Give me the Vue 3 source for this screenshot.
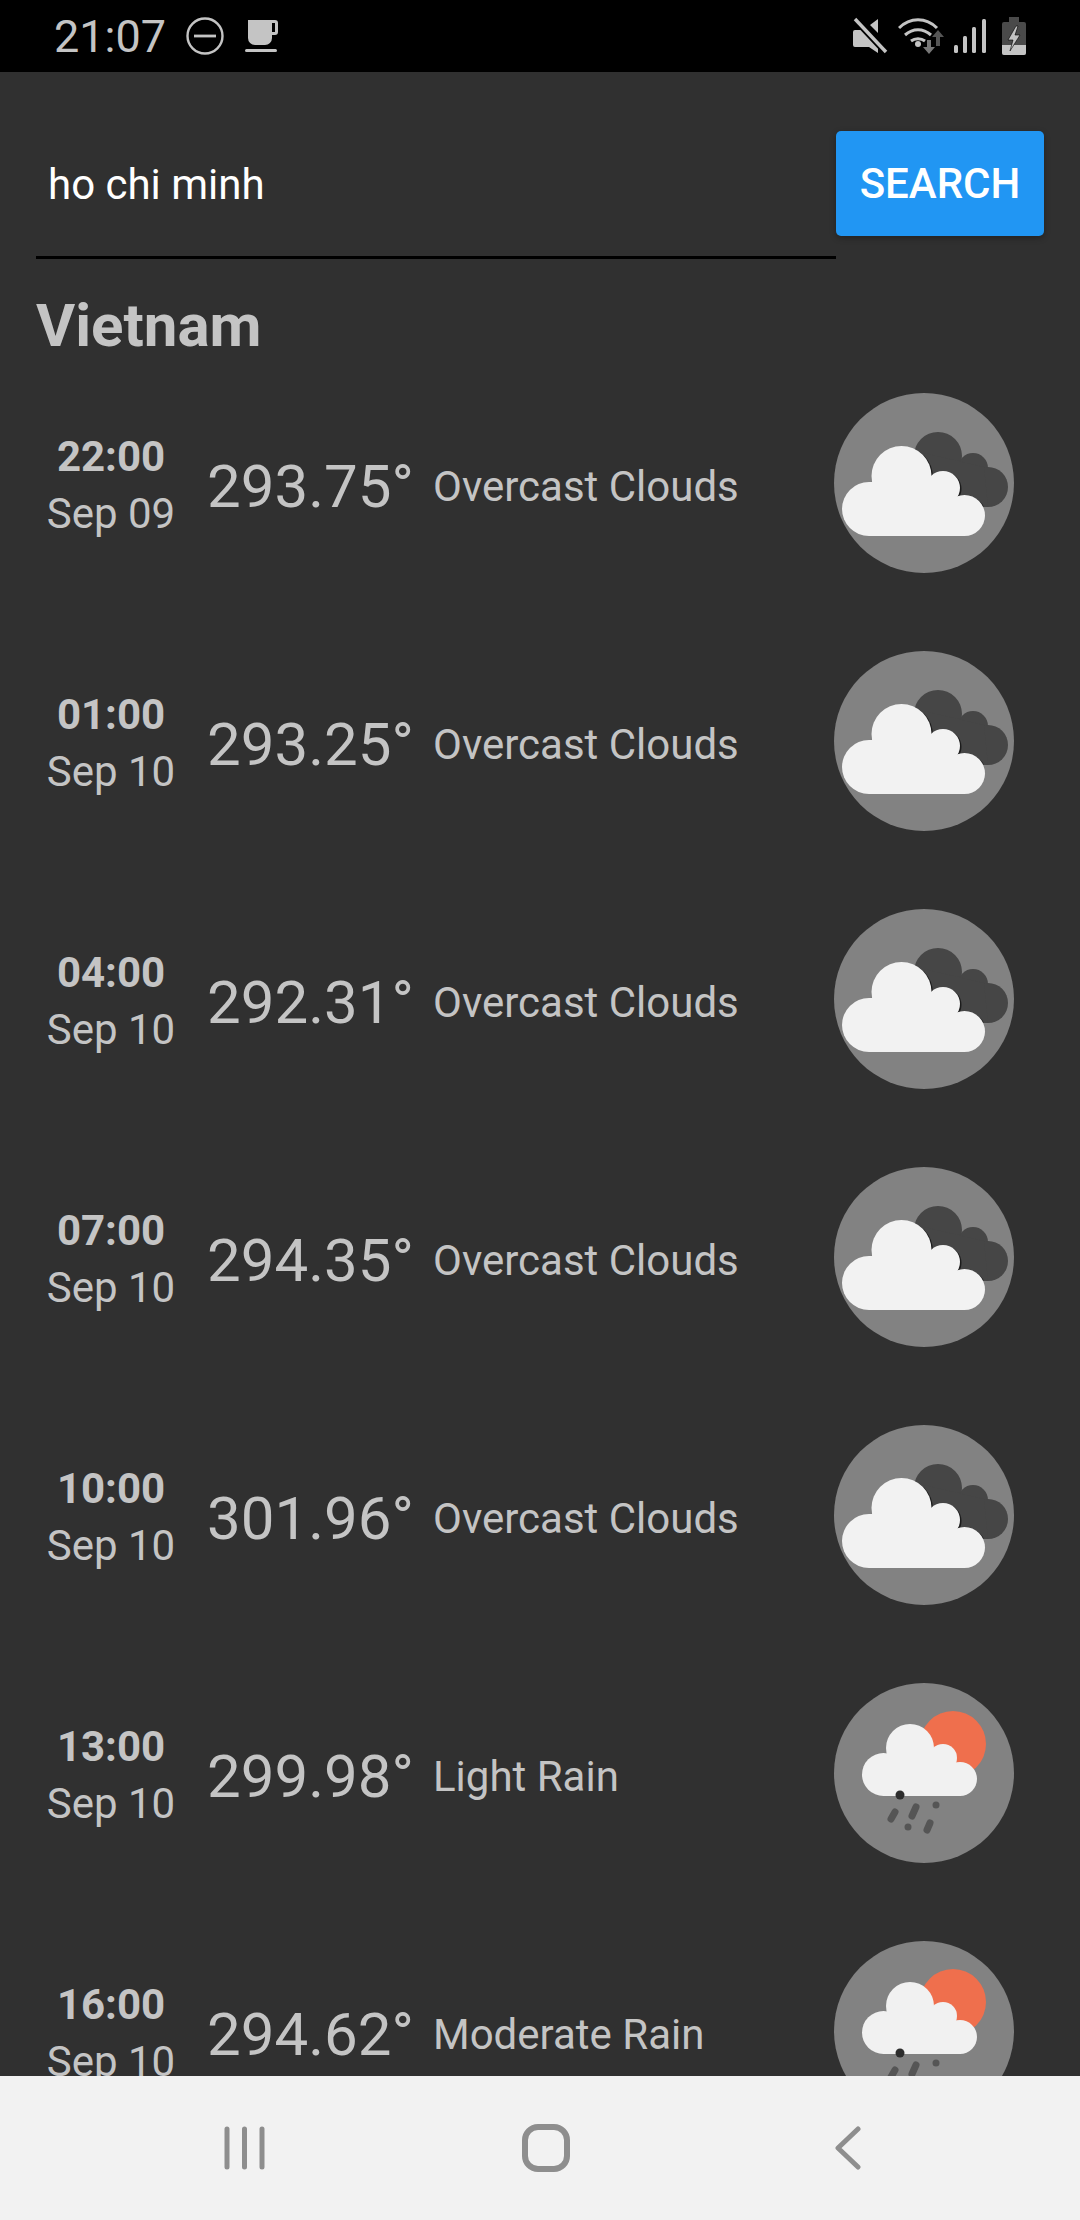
<script setup>
const rows = [
  { time: '22:00', date: 'Sep 09', temp: '293.75°', desc: 'Overcast Clouds', rain: false },
  { time: '01:00', date: 'Sep 10', temp: '293.25°', desc: 'Overcast Clouds', rain: false },
  { time: '04:00', date: 'Sep 10', temp: '292.31°', desc: 'Overcast Clouds', rain: false },
  { time: '07:00', date: 'Sep 10', temp: '294.35°', desc: 'Overcast Clouds', rain: false },
  { time: '10:00', date: 'Sep 10', temp: '301.96°', desc: 'Overcast Clouds', rain: false },
  { time: '13:00', date: 'Sep 10', temp: '299.98°', desc: 'Light Rain', rain: true },
  { time: '16:00', date: 'Sep 10', temp: '294.62°', desc: 'Moderate Rain', rain: true }
]
</script>

<template>
  <div class="page">
    <header class="status">
      <span class="clock">21:07</span>
      <svg class="dnd" width="40" height="40" viewBox="0 0 40 40">
        <circle cx="20" cy="20" r="17.5" fill="none" stroke="#c4c4c4" stroke-width="2.4" />
        <rect x="9" y="18.6" width="22" height="2.8" fill="#c4c4c4" />
      </svg>
      <svg class="cup" width="36" height="34" viewBox="0 0 36 34">
        <path d="M3 1h27a3 3 0 0 1 3 3v9a3 3 0 0 1-3 3h-3v3a7 7 0 0 1-7 7H10a7 7 0 0 1-7-7zM27 4v9h3V4z" fill="#c4c4c4" fill-rule="evenodd" />
        <rect x="0" y="30" width="32" height="3" rx="1.5" fill="#c4c4c4" />
      </svg>
      <div class="status-right">
        <svg width="36" height="38" viewBox="0 0 36 38">
          <path d="M1 15a2 2 0 0 1 2-2h6l3-2 14 14v11l-9-6H3a2 2 0 0 1-2-2zM18 8l8-6v14z" fill="#c4c4c4" />
          <path d="M3 2l31 33" stroke="#000" stroke-width="7" />
          <path d="M3 2l31 33" stroke="#c4c4c4" stroke-width="3.4" />
        </svg>
        <svg class="wifi" width="50" height="38" viewBox="0 0 50 38">
          <g fill="none" stroke="#c4c4c4" stroke-width="3">
            <path d="M1 11C12 0 28 0 39 11" />
            <path d="M7 18c8-7 18-7 26 0" />
            <path d="M13 24c4-3 10-3 14 0" />
          </g>
          <circle cx="20" cy="27" r="3" fill="#c4c4c4" />
          <path d="M29 23h4v7h4l-6 7-6-7h4z" fill="#777" />
          <path d="M40 13l6 7h-4v9h-4v-9h-4z" fill="#555" />
        </svg>
        <svg class="bars" width="34" height="36" viewBox="0 0 34 36">
          <rect x="0" y="27" width="4" height="8" rx="1.5" fill="#c4c4c4" />
          <rect x="9" y="18" width="4" height="17" rx="1.5" fill="#c4c4c4" />
          <rect x="18" y="9" width="4" height="26" rx="1.5" fill="#c4c4c4" />
          <rect x="28" y="1" width="4" height="34" rx="1.5" fill="#c4c4c4" />
        </svg>
        <svg class="batt" width="24" height="38" viewBox="0 0 24 38">
          <path d="M7 0h10v5h5a2 2 0 0 1 2 2v29a2 2 0 0 1-2 2H2a2 2 0 0 1-2-2V7a2 2 0 0 1 2-2h5z" fill="#4a4a4a" />
          <path d="M0 28h24v8a2 2 0 0 1-2 2H2a2 2 0 0 1-2-2z" fill="#c4c4c4" />
          <path d="M14 9l-8 14h5l-3 11 10-16h-5l3-9z" fill="#c4c4c4" stroke="#000" stroke-width=".6" />
        </svg>
      </div>
    </header>

    <main class="content">
      <section class="search">
        <div class="field">ho chi minh</div>
        <button class="btn">SEARCH</button>
      </section>
      <h1 class="country">Vietnam</h1>
      <ul class="list">
        <li v-for="row in rows" :key="row.time" class="row">
          <div class="when">
            <b>{{ row.time }}</b>
            <span>{{ row.date }}</span>
          </div>
          <span class="temp">{{ row.temp }}</span>
          <span class="desc">{{ row.desc }}</span>
          <svg class="icon" width="180" height="180" viewBox="0 0 180 180">
            <circle cx="90" cy="90" r="90" fill="#828282" />
            <g v-if="!row.rain">
              <clipPath id="dark-cloud">
                <circle cx="104" cy="63" r="24" />
                <circle cx="139" cy="75" r="15" />
                <circle cx="154" cy="94" r="20" />
                <path d="M90 60L150 74L154 114L120 110z" />
              </clipPath>
              <g fill="#464646">
                <circle cx="104" cy="63" r="24" />
                <circle cx="139" cy="75" r="15" />
                <circle cx="154" cy="94" r="20" />
                <path d="M90 60L150 74L154 114L120 110z" />
              </g>
              <g fill="#1c1c1c" clip-path="url(#dark-cloud)">
                <circle cx="69" cy="84" r="30" />
                <circle cx="110.500" cy="96" r="17" />
                <circle cx="132" cy="123.500" r="20.500" />
              </g>
              <g fill="#f2f2f2">
                <circle cx="35" cy="116" r="27" />
                <circle cx="67.500" cy="83" r="30" />
                <circle cx="109" cy="95" r="17" />
                <circle cx="130.500" cy="122.500" r="20.500" />
                <rect x="35" y="89" width="74" height="54" />
                <rect x="109" y="104" width="22" height="39" />
              </g>
            </g>
            <g v-else>
              <circle cx="119" cy="61" r="33" fill="#ef6f4d" />
              <g fill="#f1f1f1">
                <circle cx="49.500" cy="91.500" r="21.500" />
                <circle cx="76" cy="65" r="24" />
                <circle cx="109" cy="75" r="14" />
                <circle cx="126" cy="96" r="17" />
                <rect x="49.500" y="72" width="60" height="41" />
                <rect x="109" y="84" width="18" height="29" />
              </g>
              <circle cx="66" cy="112" r="4.500" fill="#2d2d2d" />
              <g fill="none" stroke="#555" stroke-width="7" stroke-linecap="round">
                <path d="M61 129l-4 7" />
                <path d="M82 124l-4 9" />
                <path d="M96 140l-3 7" />
                <path d="M102 122l0 .1" />
                <path d="M74 144l0 .1" />
              </g>
            </g>
          </svg>
        </li>
      </ul>
    </main>

    <footer class="nav">
      <svg class="nav-bars" width="41" height="44" viewBox="0 0 41 44" fill="none" stroke="#8e8e8e" stroke-width="5" stroke-linecap="round">
        <path d="M3 3v38M20.500 3v38M38 3v38" />
      </svg>
      <svg class="nav-home" width="48" height="48" viewBox="0 0 48 48">
        <rect x="3" y="3" width="42" height="42" rx="13" fill="none" stroke="#8e8e8e" stroke-width="6" />
      </svg>
      <svg class="nav-back" width="26" height="44" viewBox="0 0 26 44" fill="none" stroke="#8e8e8e" stroke-width="5" stroke-linecap="round" stroke-linejoin="round">
        <path d="M23 3L3 22l20 19" />
      </svg>
    </footer>
  </div>
</template>

<style>
html,
body {
  margin: 0;
  background: #303030;
}
</style>

<style scoped>
.page {
  width: 1080px;
  height: 2220px;
  display: flex;
  flex-direction: column;
  overflow: hidden;
  background: #303030;
  font-family: Roboto, sans-serif;
  color: #c4c4c4;
}

.status {
  height: 72px;
  flex: none;
  background: #000;
  display: flex;
  align-items: center;
  padding-left: 54px;
  padding-right: 54px;
  box-sizing: border-box;
}

.clock {
  font-size: 45px;
  width: 131px;
}

.cup {
  margin-left: 20px;
}

.status-right {
  margin-left: auto;
  display: flex;
  align-items: center;
}

.wifi {
  margin-left: 10px;
}

.bars {
  margin-left: 6px;
}

.batt {
  margin-left: 14px;
}

.content {
  flex: 1;
  min-height: 0;
  overflow: hidden;
}

.search {
  display: flex;
  align-items: flex-start;
  padding: 59px 36px 0 36px;
}

.field {
  flex: 1;
  height: 128px;
  box-sizing: border-box;
  border-bottom: 3px solid #000;
  padding: 0 12px;
  font-size: 42px;
  line-height: 108px;
  color: #fff;
}

.btn {
  width: 208px;
  height: 105px;
  border: 0;
  padding: 0;
  border-radius: 5px;
  background: #2196f3;
  color: #fff;
  font-family: inherit;
  font-size: 42px;
  font-weight: 500;
  box-shadow: 0 2px 6px rgba(0, 0, 0, 0.3);
}

.country {
  margin: 39px 0 0 36px;
  font-size: 60px;
  line-height: 56px;
  font-weight: 700;
}

.list {
  list-style: none;
  margin: 0;
  padding: 0;
}

.row {
  height: 258px;
  display: flex;
  align-items: center;
}

.when {
  width: 150px;
  margin-left: 36px;
  padding-top: 2px;
  display: flex;
  flex-direction: column;
  align-items: center;
  white-space: nowrap;
}

.when b {
  font-size: 42px;
  line-height: 60px;
  font-weight: 700;
}

.when span {
  font-size: 42px;
  line-height: 54px;
}

.temp {
  margin-left: 21px;
  margin-top: 6px;
  font-size: 60px;
  width: 226px;
  white-space: nowrap;
}

.desc {
  margin-top: 6px;
  font-size: 42px;
  white-space: nowrap;
}

.icon {
  margin-left: auto;
  margin-right: 66px;
  flex: none;
}

.nav {
  height: 144px;
  flex: none;
  background: #f2f2f2;
  display: flex;
  align-items: center;
  padding-left: 224px;
}

.nav-home {
  margin-left: 257px;
}

.nav-back {
  margin-left: 265px;
}
</style>
